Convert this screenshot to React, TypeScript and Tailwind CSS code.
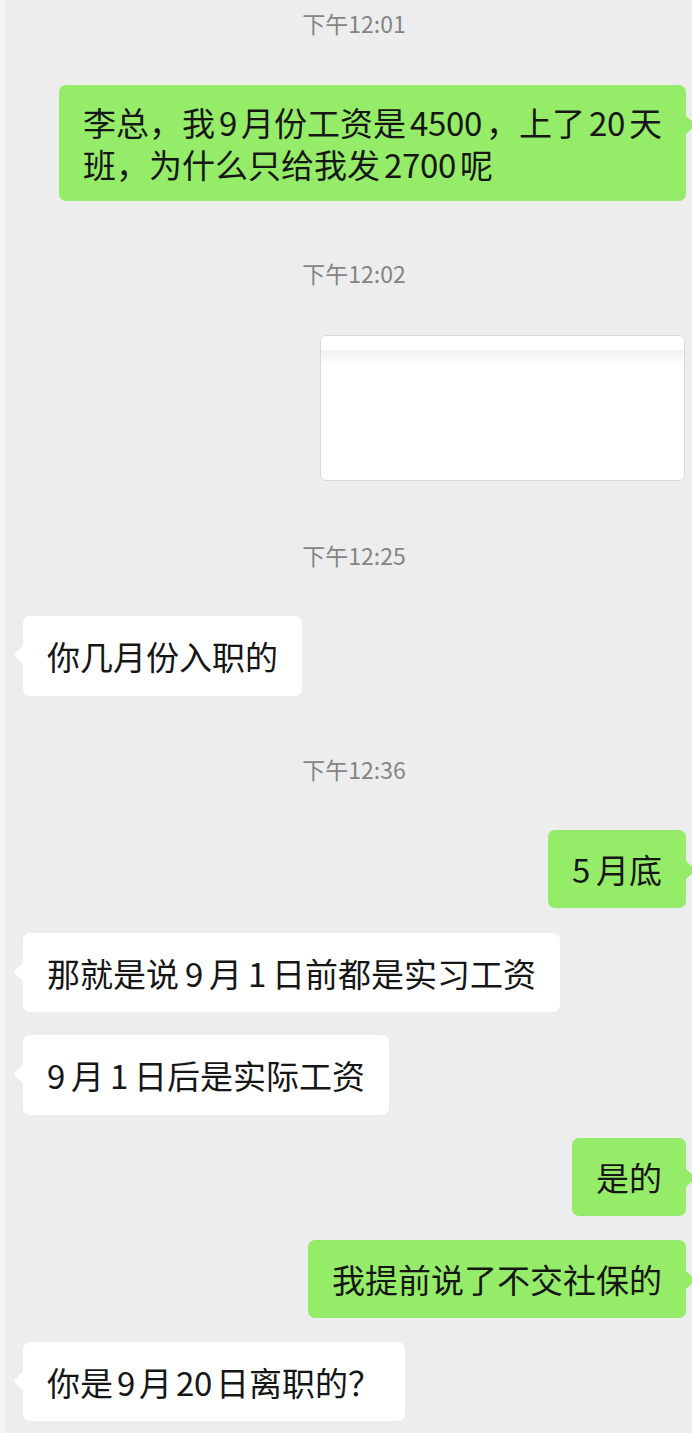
import React from "react";

const FONT = { fontFamily: '"Noto Sans CJK SC", "Noto Sans", sans-serif' };

function rich(text: string, wide: boolean) {
  const parts = text.split(/(\d+)/).filter((p) => p !== "");
  return parts.map((p, i) => {
    if (/^\d+$/.test(p)) {
      const ml = i === 0 ? "" : wide ? "ml-[6px]" : "ml-[4px]";
      const mr = i === parts.length - 1 ? "" : wide ? "mr-[6px]" : "mr-[4px]";
      return (
        <span key={i} className={`${ml} ${mr} tracking-[-0.3px]`}>
          {p}
        </span>
      );
    }
    return <React.Fragment key={i}>{p}</React.Fragment>;
  });
}

function LeftArrow() {
  return (
    <svg className="absolute left-[-10px] top-[29px]" width="11" height="20" viewBox="0 0 11 20">
      <path d="M11 0 L1.6 8.6 Q0 10 1.6 11.4 L11 20 Z" fill="#ffffff" />
    </svg>
  );
}

function RightArrow() {
  return (
    <svg className="absolute right-[-10px] top-[30px]" width="11" height="20" viewBox="0 0 11 20">
      <path d="M0 0 L9.4 8.6 Q11 10 9.4 11.4 L0 20 Z" fill="#95ec69" />
    </svg>
  );
}

function Time({ t, mt }: { t: string; mt: string }) {
  return (
    <div className={`flex justify-center pl-[10px] ${mt}`}>
      <span className="text-[23px] leading-[30px] text-[#858585]">{t}</span>
    </div>
  );
}

function LeftMsg({ text, mt, h, wide = true }: { text: string; mt: string; h: string; wide?: boolean }) {
  return (
    <div className={`flex ${mt} pl-[17px]`}>
      <div className={`relative bg-white rounded-[7px] px-[24px] ${h} flex items-center text-[33px] leading-[42px] text-[#161616]`}>
        <LeftArrow />
        <span>{rich(text, wide)}</span>
      </div>
    </div>
  );
}

function RightMsg({ text, mt, h }: { text: string; mt: string; h: string }) {
  return (
    <div className={`flex justify-end ${mt} pr-[6px]`}>
      <div className={`relative bg-[#95ec69] rounded-[7px] px-[24px] ${h} flex items-center text-[33px] leading-[42px] text-[#161616]`}>
        <RightArrow />
        <span>{rich(text, true)}</span>
      </div>
    </div>
  );
}

export default function App() {
  return (
    <div className="h-[1433px] overflow-hidden bg-[#ededed] flex" style={FONT}>
      <div className="w-[6px] bg-[#f4f4f4] shrink-0" />
      <div className="flex-1 flex flex-col">
        <Time t="下午12:01" mt="mt-[8px]" />
        <div className="flex justify-end mt-[47px] pr-[6px]">
          <div className="relative bg-[#95ec69] rounded-[7px] px-[24px] py-[16px] text-[33px] text-[#161616] whitespace-nowrap">
            <RightArrow />
            <div className="h-[42px] leading-[42px]">{rich("李总，我9月份工资是4500，上了20天", false)}</div>
            <div className="h-[42px] leading-[42px]">{rich("班，为什么只给我发2700呢", false)}</div>
          </div>
        </div>
        <Time t="下午12:02" mt="mt-[57px]" />
        <div className="flex justify-end mt-[47px] pr-[7px]">
          <div className="w-[365px] h-[146px] bg-white border border-[#dadada] rounded-[6px] overflow-hidden flex flex-col">
            <div className="h-[14px] bg-white" />
            <div className="h-[16px] bg-gradient-to-b from-[#f1f1f1] to-white" />
          </div>
        </div>
        <Time t="下午12:25" mt="mt-[59px]" />
        <LeftMsg text="你几月份入职的" mt="mt-[46px]" h="h-[80px]" />
        <Time t="下午12:36" mt="mt-[58px]" />
        <RightMsg text="5月底" mt="mt-[46px]" h="h-[78px]" />
        <LeftMsg text="那就是说9月1日前都是实习工资" mt="mt-[25px]" h="h-[79px]" />
        <LeftMsg text="9月1日后是实际工资" mt="mt-[23px]" h="h-[80px]" />
        <RightMsg text="是的" mt="mt-[23px]" h="h-[78px]" />
        <RightMsg text="我提前说了不交社保的" mt="mt-[24px]" h="h-[78px]" />
        <LeftMsg text="你是9月20日离职的？" mt="mt-[24px]" h="h-[79px]" wide={false} />
      </div>
    </div>
  );
}
